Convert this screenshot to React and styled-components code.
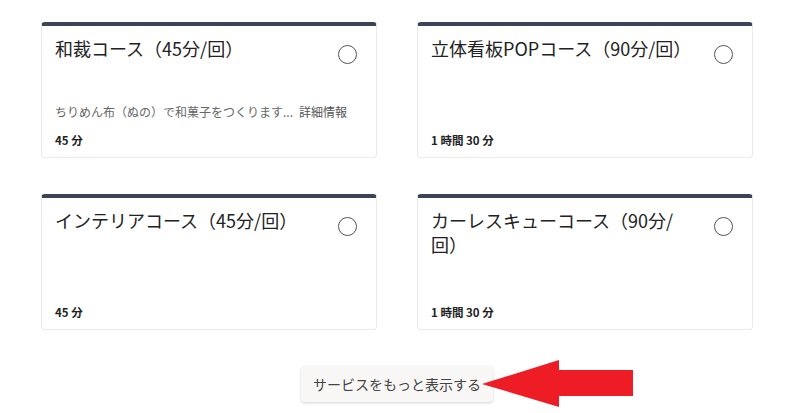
import React from 'react'
import styled, { createGlobalStyle } from 'styled-components'

const GlobalStyle = createGlobalStyle`
  body {
    margin: 0;
    background: #ffffff;
    font-family: "Noto Sans CJK JP", "Noto Sans", sans-serif;
  }
`

const Page = styled.div`
  position: relative;
  width: 798px;
  height: 413px;
  padding: 22px 0 0 41px;
  box-sizing: border-box;
  overflow: hidden;
`

const Section = styled.div`
  width: 712px;
  display: flex;
  flex-direction: column;
  align-items: center;
`

const Grid = styled.div`
  display: grid;
  grid-template-columns: 336px 336px;
  column-gap: 40px;
  row-gap: 36px;
`

const Card = styled.div`
  height: 136px;
  box-sizing: border-box;
  border: 1px solid #ebebeb;
  border-top: 4px solid #3c4457;
  border-radius: 4px;
  background: #fff;
  padding: 10px 13px 9px 13px;
  display: flex;
  flex-direction: column;
`

const Head = styled.div`
  display: flex;
  justify-content: space-between;
  align-items: flex-start;
`

const Title = styled.div`
  max-width: 260px;
  font-size: 18px;
  line-height: 24px;
  color: #222;
`

const Radio = styled.span`
  flex: none;
  width: 17px;
  height: 17px;
  margin: 9px 6px 0 0;
  border: 1.5px solid #555;
  border-radius: 50%;
`

const Spacer = styled.div`
  flex: 1;
`

const Desc = styled.div`
  font-size: 12px;
  line-height: 16px;
  color: #666;
  margin-bottom: 12px;
  white-space: nowrap;

  span {
    margin-left: 6px;
    color: #555;
  }
`

const Duration = styled.div`
  font-size: 11.5px;
  line-height: 16px;
  font-weight: 700;
  color: #222;
`

const MoreButton = styled.button`
  margin-top: 36px;
  height: 36px;
  padding: 0 12px;
  border: none;
  border-radius: 4px;
  background: #f8f7f6;
  box-shadow: 0 1px 3px rgba(0, 0, 0, 0.18);
  font-family: inherit;
  font-size: 14px;
  color: #444;
  cursor: pointer;
`

const Arrow = styled.svg`
  position: absolute;
  left: 482px;
  top: 359px;
`

const courses = [
  {
    title: '\u548C\u88C1\u30B3\u30FC\u30B9\uFF0845\u5206/\u56DE\uFF09',
    desc: '\u3061\u308A\u3081\u3093\u5E03\uFF08\u306C\u306E\uFF09\u3067\u548C\u83D3\u5B50\u3092\u3064\u304F\u308A\u307E\u3059...',
    time: '45 \u5206',
  },
  {
    title: '\u7ACB\u4F53\u770B\u677FPOP\u30B3\u30FC\u30B9\uFF0890\u5206/\u56DE\uFF09',
    time: '1 \u6642\u9593 30 \u5206',
  },
  {
    title: '\u30A4\u30F3\u30C6\u30EA\u30A2\u30B3\u30FC\u30B9\uFF0845\u5206/\u56DE\uFF09',
    time: '45 \u5206',
  },
  {
    title: '\u30AB\u30FC\u30EC\u30B9\u30AD\u30E5\u30FC\u30B3\u30FC\u30B9\uFF0890\u5206/\u56DE\uFF09',
    time: '1 \u6642\u9593 30 \u5206',
  },
]

const detailLabel = '\u8A73\u7D30\u60C5\u5831'
const moreLabel = '\u30B5\u30FC\u30D3\u30B9\u3092\u3082\u3063\u3068\u8868\u793A\u3059\u308B'

const App = () => {
  return (
    <Page>
      <GlobalStyle />
      <Section>
        <Grid>
          {courses.map((c, i) => (
            <Card key={i}>
              <Head>
                <Title>{c.title}</Title>
                <Radio />
              </Head>
              <Spacer />
              {c.desc && (
                <Desc>
                  {c.desc}
                  <span>{detailLabel}</span>
                </Desc>
              )}
              <Duration>{c.time}</Duration>
            </Card>
          ))}
        </Grid>
        <MoreButton>{moreLabel}</MoreButton>
      </Section>
      {/* red annotation arrow */}
      <Arrow width="152" height="50" viewBox="0 0 152 50">
        <polygon points="0,25 77,1 77,11 151,11 151,37 77,37 77,48" fill="#ee1c25" />
      </Arrow>
    </Page>
  )
}

export default App
